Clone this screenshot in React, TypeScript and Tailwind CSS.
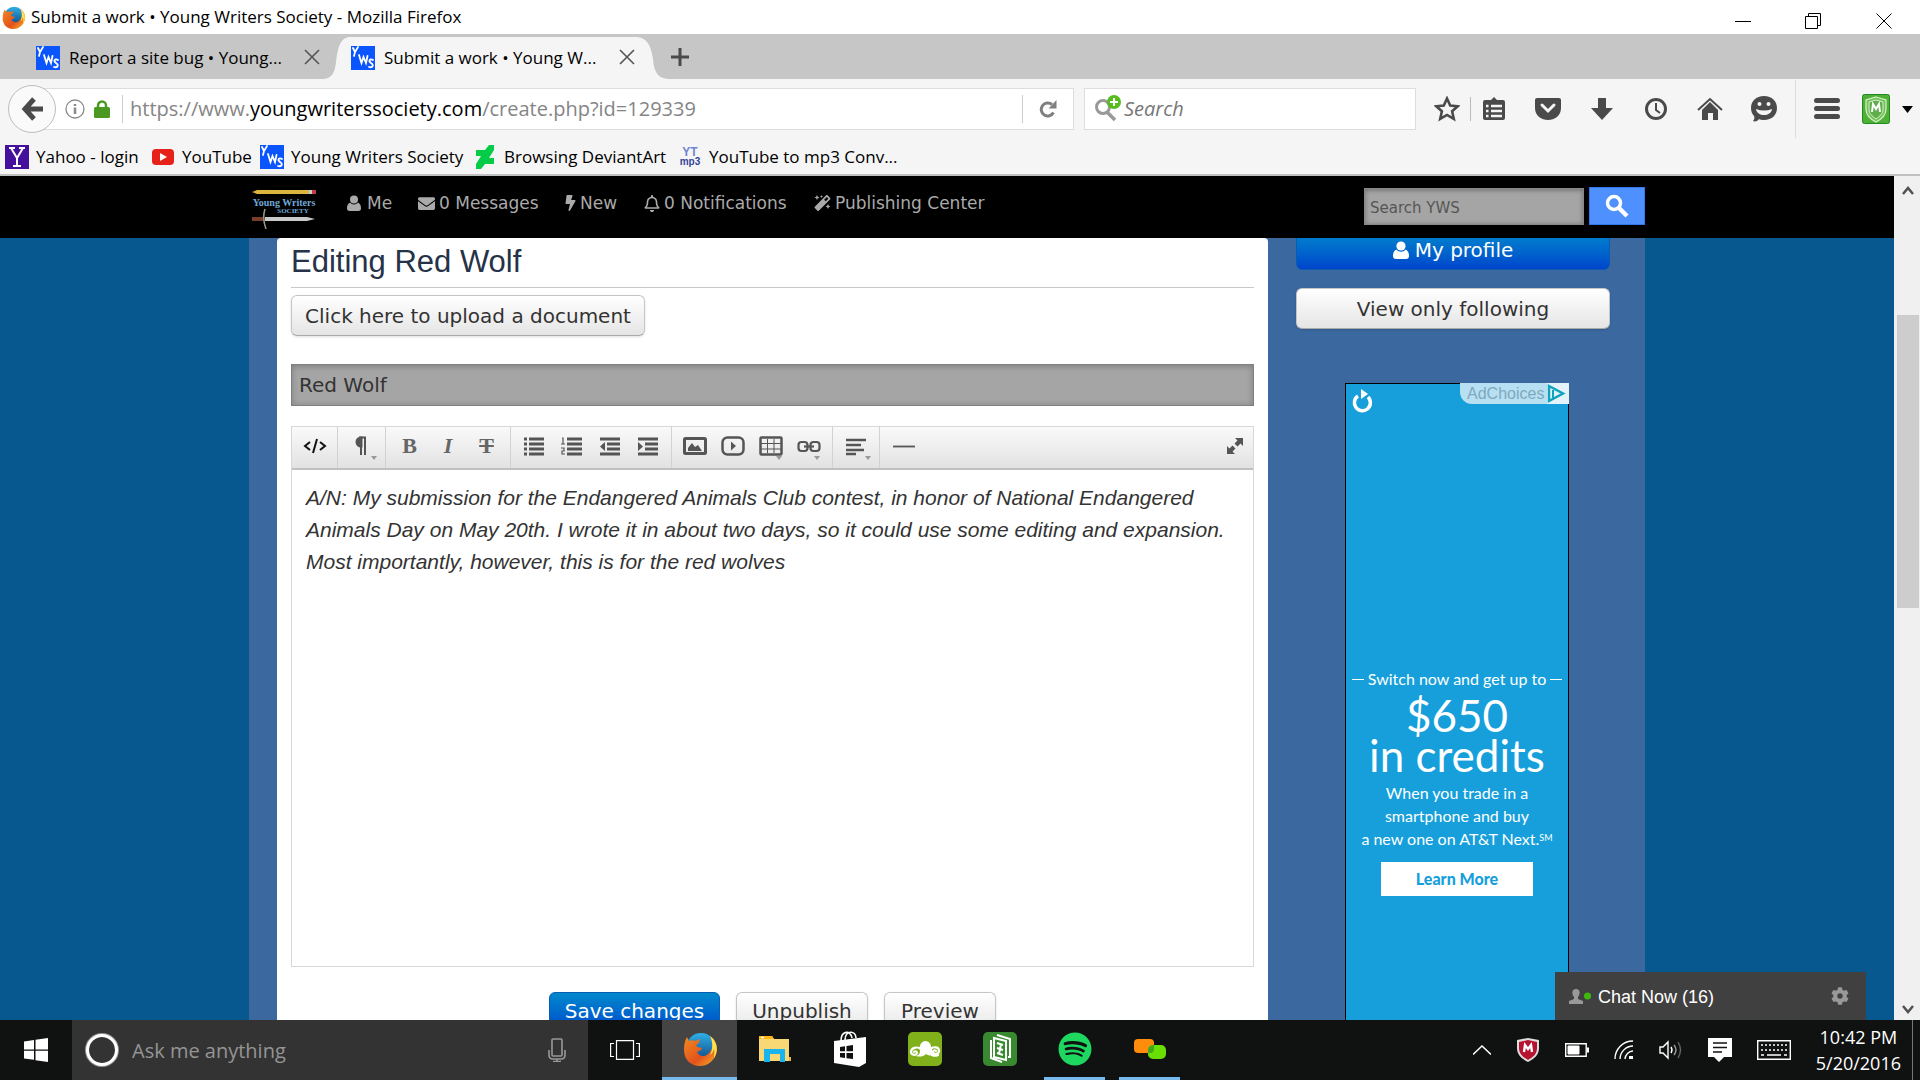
import type { ReactNode } from "react";
import { FaBolt, FaEnvelope, FaMagic, FaRegBell, FaSpotify, FaCog } from "react-icons/fa";

const SiteIcon = () => (
  <svg viewBox="0 0 24 24" className="w-6 h-6 shrink-0" fill="none" stroke="#fff" strokeWidth="1.8" strokeLinecap="round">
    <rect width="24" height="24" fill="#0b55ff" stroke="none" />
    <path d="M2 2l2 4M7 1L4 6l-1 4" />
    <path d="M8 9l2.500 8 2-6 2.500 6 1.500-7" />
    <path d="M22 14c-3-2-5 1-2 3s2 5-2 4" />
  </svg>
);

const FirefoxIcon = ({ className }: { className: string }) => (
  <svg viewBox="0 0 34 34" className={className}>
    <defs>
      <linearGradient id="globe" x1="0" y1="0" x2="0" y2="1">
        <stop offset="0" stopColor="#2fb0e8" />
        <stop offset="1" stopColor="#0c3f7c" />
      </linearGradient>
      <linearGradient id="fox" x1="0" y1="0" x2="1" y2="1">
        <stop offset="0" stopColor="#f58a1f" />
        <stop offset="0.6" stopColor="#e3521c" />
        <stop offset="1" stopColor="#f9b927" />
      </linearGradient>
    </defs>
    <circle cx="18" cy="16" r="15" fill="url(#globe)" />
    <path d="M27 4c7 5 9 13 5 21-4 6-9 9-15 9C8 34 1 28 1 18 1 12 2 8 4 5l2 4c2-1 4-1 6 0l5-2-1 4c-3 1-3 3-2 4l5 1c0 2-3 3-5 4 2 5 8 5 11 2 5-4 6-11 2-18z" fill="url(#fox)" />
    <path d="M27 4c7 5 9 14 4 22 0-4 1-6 0-9-1 3-2 5-4 6 3-6 3-13 0-19z" fill="#ffe14d" />
  </svg>
);

const PersonIcon = ({ className }: { className: string }) => (
  <svg viewBox="0 0 16 18" className={className} fill="currentColor">
    <circle cx="8" cy="5" r="4.6" />
    <path d="M3.5 8.5C1 9.5 0 12 0 15c0 2 1 3 3 3h10c2 0 3-1 3-3 0-3-1-5.500-3.500-6.500C10.500 11.500 5.500 11.500 3.500 8.500z" />
  </svg>
);

const CloseIcon = () => (
  <svg viewBox="0 0 16 16" className="w-4 h-4" stroke="#555" strokeWidth="1.6">
    <path d="M1 1l14 14M15 1L1 15" />
  </svg>
);

const TitleBar = () => (
  <div className="h-[34px] shrink-0 bg-white flex items-center justify-between pl-0.5">
    <div className="flex items-center gap-1.5">
      <FirefoxIcon className="w-[23px] h-[23px]" />
      <span className="text-[17px] leading-6">Submit a work • Young Writers Society - Mozilla Firefox</span>
    </div>
    <div className="flex pt-2">
      <button aria-label="Minimize" className="w-[70px] flex justify-center">
        <svg viewBox="0 0 16 16" className="w-4 h-4"><path d="M0 8.500h16" stroke="#000" /></svg>
      </button>
      <button aria-label="Restore" className="w-[70px] flex justify-center">
        <svg viewBox="0 0 16 16" className="w-4 h-4" fill="none" stroke="#000"><path d="M.5 3.500h12v12H.5zM3.500 3.500v-3h12v12h-3" /></svg>
      </button>
      <button aria-label="Close" className="w-[72px] flex justify-center">
        <svg viewBox="0 0 16 16" className="w-4 h-4" stroke="#000"><path d="M.5.5l15 15M15.500.5l-15 15" /></svg>
      </button>
    </div>
  </div>
);

const TabStrip = () => (
  <div className="h-[45px] shrink-0 bg-[#c6c6c6] flex items-end text-[17px] pl-9">
    <div className="flex items-center h-[42px] w-[288px]">
      <SiteIcon />
      <span className="pl-[9px] w-[244px] whitespace-nowrap">Report a site bug • Young...</span>
      <button aria-label="Close tab" className="pb-0.5"><CloseIcon /></button>
    </div>
    <svg viewBox="0 0 27 42" className="w-[27px] h-[42px]" fill="#f5f5f5">
      <path d="M0 42C9 41 11 34 12 25 14 10 16 0 27 0V42z" />
    </svg>
    <div className="flex items-center h-[42px] bg-[#f5f5f5]">
      <SiteIcon />
      <span className="pl-[9px] w-[244px] whitespace-nowrap">Submit a work • Young W...</span>
      <button aria-label="Close tab" className="pb-0.5"><CloseIcon /></button>
    </div>
    <svg viewBox="0 0 33 42" className="w-[33px] h-[42px]" fill="#f5f5f5">
      <path d="M0 0C13 0 16 10 18 22 19 34 22 41 33 42H0z" />
    </svg>
    <button aria-label="New tab" className="self-center pl-[3px]">
      <svg viewBox="0 0 18 18" className="w-[18px] h-[18px]" stroke="#4a4a4a" strokeWidth="3"><path d="M9 0v18M0 9h18" /></svg>
    </button>
  </div>
);

const BarIcon = ({ label, children }: { label: string; children: ReactNode }) => (
  <button aria-label={label} className="w-[54px] h-8 flex items-center justify-center text-[#4a4a4a]">
    <svg viewBox="0 0 26 26" className="w-[26px] h-[26px]" fill="currentColor">{children}</svg>
  </button>
);

const NavBar = () => (
  <div className="h-[60px] shrink-0 bg-[#f5f5f5] flex items-center pl-2 pr-[7px]">
    <button aria-label="Back" className="relative z-10 w-12 h-12 -mr-3 shrink-0 rounded-full border border-[#bdbdbd] bg-[#fafafa] flex items-center justify-center">
      <svg viewBox="0 0 22 24" className="w-[22px] h-6" fill="none" stroke="#4a4a4a" strokeWidth="5">
        <path d="M13 2L4 12l9 10M4 12h18" />
      </svg>
    </button>
    <div className="flex-1 h-[42px] bg-white border border-[#ddd] flex items-center pl-5 min-w-0">
      <svg viewBox="0 0 20 20" className="w-5 h-5 shrink-0" fill="none" stroke="#8a8a8a" strokeWidth="1.3">
        <circle cx="10" cy="10" r="9" />
        <path d="M10 8.500V15M10 5v2" strokeWidth="2.500" />
      </svg>
      <svg viewBox="0 0 16 18" className="w-4 h-[18px] ml-[9px] shrink-0">
        <path d="M4 9V5.500a4 4 0 018 0V9" fill="none" stroke="#4a9a22" strokeWidth="2.500" />
        <rect y="7" width="16" height="11" rx="1.500" fill="#4a9a22" />
      </svg>
      <div className="w-px h-7 bg-[#ccc] ml-3 mr-[7px]" />
      <div role="textbox" aria-label="Address" contentEditable suppressContentEditableWarning className="flex-1 text-xl text-[#858585] whitespace-nowrap outline-none">
        https://www.<span className="text-black">youngwriterssociety.com</span>/create.php?id=129339
      </div>
      <button aria-label="Reload" className="w-[51px] h-7 border-l border-[#ccc] flex items-center justify-center">
        <svg viewBox="0 0 18 18" className="w-[18px] h-[18px]" fill="none" stroke="#808080" strokeWidth="3">
          <path d="M14.500 12.500A6.500 6.500 0 1113 4.500" />
          <path d="M17.500 0v8.500H9.500z" fill="#808080" stroke="none" />
        </svg>
      </button>
    </div>
    <div className="ml-[10px] w-[332px] h-[42px] bg-white border border-[#ddd] flex items-center pl-2.5">
      <svg viewBox="0 0 26 28" className="w-[26px] h-7 shrink-0" fill="none">
        <circle cx="8" cy="12" r="6.500" stroke="#999" strokeWidth="3" />
        <path d="M12 17l8 8" stroke="#999" strokeWidth="3.500" />
        <circle cx="19" cy="7" r="7" fill="#57bc1e" />
        <path d="M19 3v8M15 7h8" stroke="#fff" strokeWidth="2" />
      </svg>
      <input aria-label="Search the web" placeholder="Search" className="w-full ml-[3px] text-xl italic placeholder:text-[#777] outline-none bg-transparent" />
    </div>
    <div className="flex items-center pl-1">
      <BarIcon label="Bookmark this page"><path d="M13 2.500l3.200 7 7.500.8-5.600 5 1.700 7.500-6.800-3.900-6.800 3.900 1.700-7.500-5.600-5 7.500-.8z" fill="none" stroke="currentColor" strokeWidth="2.600" /></BarIcon>
      <div className="w-px h-6 bg-[#bbb] -ml-1 -mr-1" />
      <BarIcon label="Bookmarks">
        <path d="M4 4h6l3-3 3 3h6q2 0 2 2v16q0 2-2 2H4q-2 0-2-2V6q0-2 2-2z" />
        <path d="M5 10h2.500M5 15h2.500M5 20h2.500M10 10h11M10 15h11M10 20h11" stroke="#f5f5f5" strokeWidth="2.500" />
      </BarIcon>
      <BarIcon label="Pocket">
        <path d="M2 2h22q2 0 2 2v8c0 16-26 16-26 0V4q0-2 2-2z" />
        <path d="M7 9l6 6 6-6" fill="none" stroke="#f5f5f5" strokeWidth="3" strokeLinecap="round" />
      </BarIcon>
      <BarIcon label="Downloads"><path d="M9 2h8v10h7L13 24 2 12h7z" /></BarIcon>
      <BarIcon label="History">
        <circle cx="13" cy="13" r="9.500" fill="none" stroke="currentColor" strokeWidth="3" />
        <path d="M13 7v7l4 3" fill="none" stroke="currentColor" strokeWidth="2" />
      </BarIcon>
      <BarIcon label="Home">
        <path d="M1 14L13 3l12 11" fill="none" stroke="currentColor" strokeWidth="2" />
        <path d="M5 14l8-8 8 8v10h-5v-7h-5v7H5z" />
      </BarIcon>
      <BarIcon label="Chat">
        <path d="M13 0c8 0 13 5 13 12s-5 12-13 12c-2 0-4-.3-5-1-1 2-4 3-6 2 1-1 2-3 1-5-2-2-3-5-3-8C0 5 5 0 13 0z" />
        <circle cx="8.500" cy="8" r="2" fill="#f5f5f5" />
        <circle cx="17.500" cy="8" r="2" fill="#f5f5f5" />
        <path d="M5 13q8 3 16 0c-1 8-15 8-16 0z" fill="#f5f5f5" />
      </BarIcon>
      <div className="w-px h-[58px] bg-[#ddd] ml-1 mr-1" />
      <BarIcon label="Menu"><path d="M2.500 4.500h21M2.500 12.500h21M2.500 20.500h21" stroke="currentColor" strokeWidth="5" strokeLinecap="round" /></BarIcon>
      <button aria-label="McAfee" className="flex items-center gap-3 pl-2">
        <svg viewBox="0 0 28 30" className="w-7 h-[30px]">
          <rect x=".5" y=".5" width="27" height="29" rx="2" fill="#4eb035" stroke="#1e8a22" />
          <path d="M14 3l10 3v9c0 6-4 10-10 13C8 25 4 21 4 15V6z" fill="#72c255" stroke="#d9f0d0" strokeWidth="1.200" />
          <path d="M14 6l7 2v7c0 5-3 7-7 10-4-3-7-5-7-10V8z" fill="#5fae4c" stroke="#d9f0d0" />
          <path d="M10 18l1-8 3 5 3-5 1 8" fill="none" stroke="#fff" strokeWidth="2" />
        </svg>
        <svg viewBox="0 0 11 7" className="w-[11px] h-[7px]"><path d="M0 0h11L5.500 7z" /></svg>
      </button>
    </div>
  </div>
);

const Bookmarks = () => (
  <div className="h-[37px] shrink-0 bg-[#f5f5f5] border-b-2 border-[#c0c0c0] flex items-center pl-[5px] text-[17px] whitespace-nowrap">
    <a href="#yahoo" className="flex items-center gap-[7px] w-[147px]">
      <svg viewBox="0 0 24 24" className="w-6 h-6"><rect width="24" height="24" fill="#45109c" /><path d="M4 3h6M14 3h6M6 3l6 10 6-10M12 12v9M8 21h8" stroke="#fff" strokeWidth="2" fill="none" /></svg>
      Yahoo - login
    </a>
    <a href="#youtube" className="flex items-center gap-2 w-[108px]">
      <svg viewBox="0 0 22 16" className="w-[22px] h-4"><rect width="22" height="16" rx="4" fill="#e62117" /><path d="M8 4l7 4-7 4z" fill="#fff" /></svg>
      YouTube
    </a>
    <a href="#yws" className="flex items-center gap-[7px] w-[216px]"><SiteIcon />Young Writers Society</a>
    <a href="#deviantart" className="flex items-center gap-2.5 w-[203px]">
      <svg viewBox="0 0 18 24" className="w-[18px] h-6"><path d="M18 0v5l-5 8h5v6H9l-4 5H0v-5l5-8H0V5h9l4-5z" fill="#05cc47" /></svg>
      Browsing DeviantArt
    </a>
    <a href="#ytmp3" className="flex items-center gap-2">
      <svg viewBox="0 0 22 20" className="w-[22px] h-5" fontFamily="Liberation Sans, sans-serif" fontWeight="bold" textAnchor="middle">
        <text x="11" y="9" fontSize="12" fill="#6f86d6">YT</text>
        <text x="11" y="18" fontSize="10" fill="#33459a">mp3</text>
      </svg>
      YouTube to mp3 Conv...
    </a>
  </div>
);

const SiteHeader = () => (
  <header className="h-[62px] shrink-0 bg-black">
    <div className="max-w-[1396px] mx-auto flex text-[#aaa] text-[17px]">
      <a href="#home" aria-label="The Young Writers Society" className="w-[98px] pt-[13px] pl-0.5">
        <svg viewBox="0 0 66 40" className="w-[66px] h-10" fontFamily="Liberation Serif, serif" fontWeight="bold" fill="#6fa8d6" textAnchor="middle">
          <path d="M1 3l5-2h52v4H6z" fill="#dcb53e" />
          <path d="M58 1h3v4h-3z" fill="#ccc" />
          <path d="M61 1h4v4h-4z" fill="#c23b4b" />
          <text x="33" y="17" fontSize="10">Young Writers</text>
          <text x="42" y="24" fontSize="7">SOCIETY</text>
          <path d="M14 28h42l8 2-8 2H14z" fill="#c9c9c9" />
          <path d="M1 28h12v4H1z" fill="#7a3f2a" />
          <path d="M14 20q-3 9 1 20" stroke="#9a9a8a" strokeWidth="1.500" fill="none" />
        </svg>
      </a>
      <nav className="flex items-start pt-[15px] leading-6 whitespace-nowrap">
        <a href="#me" className="flex items-center gap-1.5 w-[71px]"><PersonIcon className="w-3.5 h-4" />Me</a>
        <a href="#messages" className="flex items-center gap-1 w-[147px]"><FaEnvelope className="w-[17px] h-[17px]" />0 Messages</a>
        <a href="#new" className="flex items-center gap-1 w-[79px]"><FaBolt className="w-[11px] h-4" />New</a>
        <a href="#notifications" className="flex items-center gap-1 w-[170px]"><FaRegBell className="w-4 h-[17px]" />0 Notifications</a>
        <a href="#publishing" className="flex items-center gap-1"><FaMagic className="w-[17px] h-4" />Publishing Center</a>
      </nav>
      <form className="flex ml-auto pt-[11px] gap-[5px] items-start">
        <input aria-label="Search YWS" placeholder="Search YWS" className="mt-px w-[220px] h-[37px] bg-[#a5a5a5] border border-[#888] shadow-[inset_0_1px_5px_rgba(0,0,0,0.35)] px-[5px] pt-0.5 text-[15px] placeholder:text-[#555] outline-none" />
        <button aria-label="Search" type="button" className="w-14 h-[38px] bg-[#4d90fe] border border-[#3079ed] flex items-center justify-center">
          <svg viewBox="0 0 24 24" className="w-6 h-6" fill="none" stroke="#fff"><circle cx="9" cy="9" r="6.500" strokeWidth="3.500" /><path d="M14 14l8 8" strokeWidth="4.500" /></svg>
        </button>
      </form>
    </div>
  </header>
);

const grayButton = "h-[41px] rounded-md border border-[#c5c5c5] border-b-[#aaa] bg-linear-to-b from-white to-[#e5e5e5] text-[#333] shadow-sm";
const blueButton = "h-[41px] rounded-md border border-[#0a5cb0] bg-linear-to-b from-[#0088cc] to-[#0044cc] text-white";

const Tool = ({ label, size, menu, children }: { label: string; size: string; menu?: boolean; children: ReactNode }) => (
  <button aria-label={label} className={`${size} h-full pb-1 relative flex items-center justify-center text-[#555]`}>
    <svg viewBox="0 0 24 20" className="w-6 h-5" fill="none" stroke="currentColor" strokeWidth="3">{children}</svg>
    {menu && <svg viewBox="0 0 6 4" className="w-1.5 h-1 absolute right-2 bottom-2" fill="#999"><path d="M0 0h6L3 4z" /></svg>}
  </button>
);

const toolGroup = "flex h-full border-r border-[#d2d2d2]";
const letterTool = "pb-1 text-[22px] leading-5 font-bold text-[#666]";

const Editor = () => (
  <div className="mt-5 border border-[#d8d8d8]">
    <div className="h-[43px] bg-linear-to-b from-[#fafafa] to-[#e2e2e2] border-b-2 border-[#c0c0c0] flex">
      <div className={toolGroup}>
        <Tool label="HTML" size="w-[45px]"><path d="M7 6l-5 4 5 4M17 6l5 4-5 4M14 3l-4 14" stroke="#111" strokeWidth="2" /></Tool>
      </div>
      <div className={toolGroup}>
        <Tool label="Formatting" size="w-[47px]" menu><path d="M15 1v18M11 1v18M16 1.500H9" strokeWidth="2" /><path d="M11 2a4 4 0 000 8z" fill="currentColor" /></Tool>
      </div>
      <div className={`${toolGroup} px-1 font-['Liberation_Serif',serif]`}>
        <button aria-label="Bold" className={`${letterTool} w-[39px]`}>B</button>
        <button aria-label="Italic" className={`${letterTool} w-[38px] italic`}>I</button>
        <button aria-label="Strikethrough" className={`${letterTool} w-[39px] line-through`}>T</button>
      </div>
      <div className={`${toolGroup} px-1`}>
        <Tool label="Unordered list" size="w-[38px]"><path d="M7 3h15M7 8h15M7 13h15M7 18h15M2 3h3M2 8h3M2 13h3M2 18h3" /></Tool>
        <Tool label="Ordered list" size="w-[38px]"><path d="M7 3h15M7 8h15M7 13h15M7 18h15" /><path d="M2 2h1v6M1 8h4M1 12h3v3H2v3h3" strokeWidth="1.200" /></Tool>
        <Tool label="Outdent" size="w-[38px]"><path d="M2 3h20M9 8h13M9 13h13M2 18h20" /><path d="M7 6v9l-5-4.500z" fill="currentColor" stroke="none" /></Tool>
        <Tool label="Indent" size="w-[38px]"><path d="M2 3h20M9 8h13M9 13h13M2 18h20" /><path d="M2 6v9l5-4.500z" fill="currentColor" stroke="none" /></Tool>
      </div>
      <div className={`${toolGroup} px-1`}>
        <Tool label="Image" size="w-[38px]"><rect x="1.500" y="2.500" width="21" height="15" rx="1" /><path d="M5 15v-3l4-5 3 4 3-2 4 6z" fill="currentColor" stroke="none" /></Tool>
        <Tool label="Video" size="w-[38px]"><rect x="1.500" y="1.500" width="21" height="17" rx="5" strokeWidth="2.500" /><path d="M10 5.500l5 4.500-5 4.500z" fill="currentColor" stroke="none" /></Tool>
        <Tool label="Table" size="w-[38px]" menu><rect x="1.500" y="1.500" width="21" height="17" rx="1" strokeWidth="2.500" /><path d="M2 7.500h20M2 13h20M8.500 3v14M15 3v14" strokeWidth="1" /></Tool>
        <Tool label="Link" size="w-[38px]" menu><rect x="1.500" y="6" width="9" height="9" rx="3" strokeWidth="2.200" /><rect x="13.500" y="6" width="9" height="9" rx="3" strokeWidth="2.200" /><path d="M7 10.500h10" strokeWidth="2.200" /></Tool>
      </div>
      <div className={toolGroup}>
        <Tool label="Alignment" size="w-[46px]" menu><path d="M2 4h20M2 9h15M2 14h18M2 18h10" strokeWidth="2.600" /></Tool>
      </div>
      <Tool label="Horizontal rule" size="w-[47px]"><path d="M1 10.500h22" strokeWidth="1.800" /></Tool>
      <span className="flex-1" />
      <Tool label="Fullscreen" size="w-[36px]"><path d="M12 2h8v8l-2.500-2.500-3 3-3-3 3-3zM4 18v-8l2.500 2.500 3-3 3 3-3 3L12 18z" fill="currentColor" stroke="none" /></Tool>
    </div>
    <textarea
      aria-label="Work text"
      className="block w-full h-[496px] px-3.5 py-3 resize-none outline-none italic text-[21px] leading-8 text-[#333] font-['Liberation_Sans',Arial,sans-serif]"
      defaultValue="A/N: My submission for the Endangered Animals Club contest, in honor of National Endangered Animals Day on May 20th. I wrote it in about two days, so it could use some editing and expansion. Most importantly, however, this is for the red wolves"
    />
  </div>
);

const Ad = () => (
  <aside className="relative mt-[54px] ml-[49px] w-[224px] h-[900px] bg-[#169fdb] border border-black text-white text-center font-['Lato',sans-serif] pt-[283px]">
    <svg viewBox="0 0 22 26" className="absolute left-1.5 top-1 w-[22px] h-[26px]" fill="none" stroke="#fff" strokeWidth="3.500">
      <path d="M6 8a8 8 0 1010 1" />
      <path d="M9 1l7 5-7 5z" fill="#fff" stroke="none" />
    </svg>
    <a href="#adchoices" className="absolute -right-px -top-px h-[21px] w-[109px] rounded-bl-xl bg-[#b8e0f3] text-[#7fa9bd] text-[16px] leading-5 flex items-center font-['Liberation_Sans',sans-serif] pl-[7px]">
      AdChoices
      <svg viewBox="0 0 26 21" className="w-[26px] h-[21px] absolute right-0"><path d="M4 0h22v21H4z" fill="#e4f3fa" /><path d="M6 3l14 7.500L6 18z" fill="none" stroke="#0fa3bd" strokeWidth="2.500" /><path d="M10 7v8" stroke="#0fa3bd" strokeWidth="2" /></svg>
    </a>
    <p className="text-[16px] leading-6 flex items-center justify-center gap-1 whitespace-nowrap"><span className="w-3 h-px bg-white" />Switch now and get up to<span className="w-3 h-px bg-white" /></p>
    <p className="text-[44px] leading-[40px] pt-1">$650</p>
    <p className="text-[44px] leading-[40px]">in credits</p>
    <p className="text-[16px] leading-[23px] pt-1.5 whitespace-nowrap">When you trade in a<br />smartphone and buy<br />a new one on AT&amp;T Next.<sup className="text-[9px]">SM</sup></p>
    <button className="mt-3 w-[152px] h-[34px] bg-white text-[#169fdb] text-[16px] font-black">Learn More</button>
  </aside>
);

const ChatBar = () => (
  <div className="absolute right-7 bottom-0 w-[311px] h-12 bg-[#404040] text-white flex items-center pl-3.5 pr-[17px] font-['Liberation_Sans',sans-serif] text-lg">
    <svg viewBox="0 0 22 15" className="w-[22px] h-[15px] mr-[7px]">
      <path d="M7 0c5 0 4 6 2 8v2l5 2v3H0v-3l5-2V8C3 6 2 0 7 0z" fill="#999" />
      <circle cx="18.500" cy="7" r="3.500" fill="#3cb80e" />
    </svg>
    <span className="pt-0.5">Chat Now (16)</span>
    <button aria-label="Chat settings" className="ml-auto text-[#999]"><FaCog className="w-[18px] h-[18px]" /></button>
  </div>
);

const SitePage = () => (
  <div className="flex-1 min-w-0 flex flex-col relative overflow-hidden bg-[#07588f] font-[Verdana,'DejaVu_Sans',sans-serif]">
    <SiteHeader />
    <div className="flex-1 min-h-0 overflow-hidden">
      <div className="max-w-[1396px] mx-auto bg-[#3b699f] pl-7 pr-[35px] flex gap-7 items-start">
        <main className="flex-1 bg-white rounded-t px-3.5 pb-40">
          <h1 className="text-[31px] leading-[48px] text-[#263248] border-b border-[#c8c8c8] pb-px font-['Liberation_Sans',Arial,sans-serif]">Editing Red Wolf</h1>
          <button className={`${grayButton} mt-[7px] w-[354px] text-[20px]`}>Click here to upload a document</button>
          <input aria-label="Title" defaultValue="Red Wolf" className="block mt-7 w-full h-[42px] px-[7px] bg-[#a5a5a5] border border-[#808080] shadow-[inset_0_1px_6px_rgba(0,0,0,0.25)] text-[20px] text-[#333] outline-none" />
          <Editor />
          <div className="flex justify-center gap-4 pt-[25px] text-[20px] leading-6">
            <button className={`${blueButton} w-[171px] pb-1`}>Save changes</button>
            <button className={`${grayButton} w-[132px] pb-1`}>Unpublish</button>
            <button className={`${grayButton} w-[112px] pb-1`}>Preview</button>
          </div>
        </main>
        <div className="w-[314px] -mt-[9px]">
          <button className={`${blueButton} w-full text-[20px] flex items-center justify-center gap-1.5`}><PersonIcon className="w-4 h-[18px]" />My profile</button>
          <button className={`${grayButton} w-full text-[20px] mt-[18px]`}>View only following</button>
          <Ad />
        </div>
      </div>
    </div>
    <ChatBar />
  </div>
);

const Scrollbar = () => (
  <div className="w-[26px] bg-[#f0f0f0] flex flex-col items-center pl-0.5 py-2.5">
    <svg viewBox="0 0 12 10" className="w-3 h-2.5" fill="none" stroke="#505050" strokeWidth="2.500"><path d="M1 8l5-6 5 6" /></svg>
    <div className="mt-[119px] w-[22px] h-[293px] bg-[#cdcdcd]" />
    <svg viewBox="0 0 12 10" className="w-3 h-2.5 mt-auto -mb-1" fill="none" stroke="#505050" strokeWidth="2.500"><path d="M1 2l5 6 5-6" /></svg>
  </div>
);

const TaskApp = ({ label, running, active, children }: { label: string; running?: boolean; active?: boolean; children: ReactNode }) => (
  <button aria-label={label} className={`w-[75px] h-full flex flex-col items-center ${active ? "bg-[#444]" : ""}`}>
    <span className="flex-1 flex items-center">{children}</span>
    <span className={`h-[3px] ${active ? "w-full" : "w-[61px]"} ${running ? "bg-[#76b9ed]" : ""}`} />
  </button>
);

const Taskbar = () => (
  <footer className="h-[60px] shrink-0 bg-[#101111] text-white flex items-center">
    <button aria-label="Start" className="w-[72px] flex justify-center">
      <svg viewBox="0 0 24 24" className="w-6 h-6" fill="#fff"><path d="M0 3.500l10-1.500v9.500H0zM11.500 1.800L24 0v11.500H11.500zM0 12.800h10v9L0 20.500zM11.500 12.800H24V24l-12.500-1.700z" /></svg>
    </button>
    <div className="w-[516px] h-full bg-[#333] flex items-center pl-3 pr-[22px]">
      <svg viewBox="0 0 36 36" className="w-9 h-9 shrink-0" fill="none"><circle cx="18" cy="18" r="15" stroke="#999" strokeWidth="4" /><circle cx="18" cy="18" r="14.500" stroke="#fff" strokeWidth="3" /></svg>
      <input aria-label="Ask me anything" placeholder="Ask me anything" className="flex-1 ml-3 pt-0.5 text-[20px] placeholder:text-[#959595] bg-transparent outline-none" />
      <svg viewBox="0 0 18 24" className="w-[18px] h-6" fill="none" stroke="#999" strokeWidth="1.600"><rect x="4" y="1" width="10" height="17" rx="1" /><path d="M1 12v5q0 4 4 4h8q4 0 4-4v-5M9 21v3M5 23.500h8" /></svg>
    </div>
    <button aria-label="Task view" className="w-[74px] flex justify-center">
      <svg viewBox="0 0 30 20" className="w-[30px] h-5" fill="none" stroke="#fff" strokeWidth="1.200"><path d="M6.500.6h17v18.800h-17zM4 3.500H.6v13H4M26 3.500h3.400v13H26" /></svg>
    </button>
    <TaskApp label="Firefox" running active><FirefoxIcon className="w-[34px] h-[34px]" /></TaskApp>
    <TaskApp label="File Explorer">
      <svg viewBox="0 0 32 28" className="w-8 h-7"><path d="M0 1h13l2 3h15v22H0z" fill="#f8d775" /><path d="M0 1h13l2 3H0z" fill="#fdb813" /><path d="M2 2.500h3" stroke="#fff" strokeWidth="1.500" /><path d="M30 22h2v4h-2z" fill="#e0b550" /><path d="M5 27V14h21v13h-5v-8H11v8z" fill="#17b4ee" /></svg>
    </TaskApp>
    <TaskApp label="Store">
      <svg viewBox="0 0 32 36" className="w-8 h-9"><path d="M7 10C7-1 17-1 18 7M11 9c0-10 11-10 11-2" fill="none" stroke="#fff" strokeWidth="1.600" /><path d="M0 10l32-4v26l-7 4-25-4z" fill="#fff" /><path d="M6 16l5-.7v5H6zM12.500 15l6.500-1v6.300h-6.500zM6 22h5v5l-5-.7zM12.500 22H19v6l-6.500-.8z" fill="#111" /></svg>
    </TaskApp>
    <TaskApp label="Cloud">
      <svg viewBox="0 0 34 34" className="w-[34px] h-[34px]">
        <rect width="34" height="34" rx="5" fill="#80b01a" />
        <path d="M8 24c3-1 4-3 4-5-1-4 0-9 5-10 4 0 6 3 6 6 1 3 2 5 4 7-3 2-6 2-9 0-3 3-7 3-10 2z" fill="#fff" />
        <g fill="none" stroke="#fff" strokeWidth="2.200" strokeLinecap="round">
          <path d="M13 17c-4-3-10-1-10 3 0 3 5 4 6 1 0-2-3-2-3-1" />
          <path d="M22 17c4-3 9-2 9 2 0 3-5 4-6 1 0-2 3-2 3-1M24 23c2 1 4 1 6 0" />
        </g>
      </svg>
    </TaskApp>
    <TaskApp label="Reader">
      <svg viewBox="0 0 34 34" className="w-[34px] h-[34px]"><rect width="34" height="34" rx="5" fill="#38892f" /><g fill="none" stroke="#fff" strokeWidth="2"><path d="M8 8v18l11 4M14 3l13 4v18h-2M11 6l12 3v19l-12-3z" /><path d="M14 11l6 2M14 16l6 2M14 21l6 2M18 12l-2 10" /></g></svg>
    </TaskApp>
    <TaskApp label="Spotify" running><FaSpotify className="w-[34px] h-[34px] text-[#1ed760]" /></TaskApp>
    <TaskApp label="Messages" running>
      <svg viewBox="0 0 32 22" className="w-8 h-[22px]"><rect y="1" width="20" height="14" rx="4" fill="#ff8c0a" /><rect x="14" y="7" width="18" height="14" rx="5" fill="#6adf04" /><path d="M14 15v-4q1-4 6-4v4q0 4-4 4z" fill="#41a81c" /></svg>
    </TaskApp>
    <div className="ml-auto flex items-center gap-[25px] pr-[7px]">
      <svg viewBox="0 0 18 10" className="w-[18px] h-2.5" fill="none" stroke="#fff" strokeWidth="1.500"><path d="M0 9.500l9-8.500 9 8.500" /></svg>
      <svg viewBox="0 0 24 24" className="w-6 h-6"><path d="M12 0l11 2v8c0 7-5 11-11 14C6 21 1 17 1 10V2z" fill="#ddd" /><path d="M12 2l9 2v6c0 6-4 9-9 12-5-3-9-6-9-12V4z" fill="#b51330" /><path d="M8 14l1-7 3 4 3-4 1 7" fill="none" stroke="#fff" strokeWidth="2.400" /></svg>
      <svg viewBox="0 0 24 14" className="w-6 h-3.5" fill="none" stroke="#fff"><path d="M.7.700h20.500v12.600H.7z" strokeWidth="1.400" /><path d="M23 4.500v5" strokeWidth="2" /><path d="M3 3h11v8H3z" fill="#fff" /></svg>
      <svg viewBox="0 0 20 20" className="w-5 h-5" fill="none" stroke="#fff" strokeWidth="1.400"><path d="M1 19C1 9 9 1 19 1M6 19C6 12 12 6 19 6M11 19c0-4 4-8 8-8" /><path d="M15 16h4v3h-4z" fill="#fff" stroke="none" /></svg>
      <svg viewBox="0 0 24 20" className="w-6 h-5" fill="none" stroke="#fff" strokeWidth="1.400"><path d="M1 7h3l5-5v16l-5-5H1z" /><path d="M12 7q2 3 0 6" /><path d="M15 5q4 5 0 10" stroke="#999" /><path d="M19 2q5 8 0 16" stroke="#666" /></svg>
      <svg viewBox="0 0 24 24" className="w-6 h-6"><path d="M0 0h24v19h-8l-5 5-5-5H0z" fill="#fff" /><path d="M5 5h14M5 9.500h14M5 14h9" stroke="#111" strokeWidth="1.300" /></svg>
      <svg viewBox="0 0 34 20" className="w-[34px] h-5" fill="none" stroke="#fff"><path d="M.7.700h32.600v18.600H.7z" strokeWidth="1.400" /><path d="M4 5h26M4 10h26" strokeWidth="1.500" strokeDasharray="2 2" /><path d="M4 15h3M10 15h14M27 15h3" strokeWidth="1.500" /></svg>
      <div className="-mr-3.5 text-center text-[18px] leading-[26px] whitespace-nowrap">10:42 PM<br />5/20/2016</div>
      <div className="w-px h-[60px] bg-[#777]" />
    </div>
  </footer>
);

const App = () => (
  <div className="h-screen flex flex-col overflow-hidden text-black font-['Open_Sans',sans-serif]">
    <TitleBar />
    <TabStrip />
    <NavBar />
    <Bookmarks />
    <div className="flex-1 min-h-0 flex">
      <SitePage />
      <Scrollbar />
    </div>
    <Taskbar />
  </div>
);

export default App;
